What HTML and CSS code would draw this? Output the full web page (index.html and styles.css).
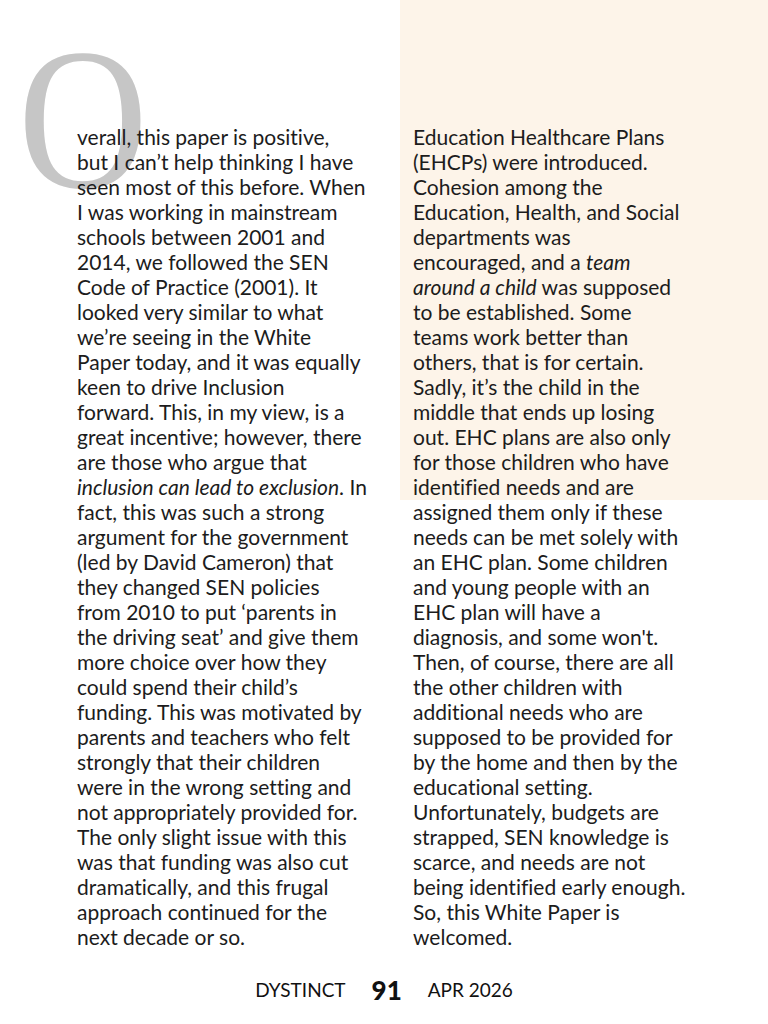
FILE: index.html
```html
<!DOCTYPE html>
<html lang="en">
<head>
<meta charset="utf-8">
<title>Dystinct 91</title>
<link rel="stylesheet" href="styles.css">
</head>
<body>
<div class="page">
  <span class="dropcap">O</span>
  <div class="columns">
    <p class="col">verall, this paper is positive,<br>
but I can’t help thinking I have<br>
seen most of this before. When<br>
I was working in mainstream<br>
schools between 2001 and<br>
2014, we followed the SEN<br>
Code of Practice (2001). It<br>
looked very similar to what<br>
we’re seeing in the White<br>
Paper today, and it was equally<br>
keen to drive Inclusion<br>
forward. This, in my view, is a<br>
great incentive; however, there<br>
are those who argue that<br>
<i>inclusion can lead to exclusion</i>. In<br>
fact, this was such a strong<br>
argument for the government<br>
(led by David Cameron) that<br>
they changed SEN policies<br>
from 2010 to put ‘parents in<br>
the driving seat’ and give them<br>
more choice over how they<br>
could spend their child’s<br>
funding. This was motivated by<br>
parents and teachers who felt<br>
strongly that their children<br>
were in the wrong setting and<br>
not appropriately provided for.<br>
The only slight issue with this<br>
was that funding was also cut<br>
dramatically, and this frugal<br>
approach continued for the<br>
next decade or so.</p>
    <p class="col">Education Healthcare Plans<br>
(EHCPs) were introduced.<br>
Cohesion among the<br>
Education, Health, and Social<br>
departments was<br>
encouraged, and a <i>team</i><br>
<i>around a child</i> was supposed<br>
to be established. Some<br>
teams work better than<br>
others, that is for certain.<br>
Sadly, it’s the child in the<br>
middle that ends up losing<br>
out. EHC plans are also only<br>
for those children who have<br>
identified needs and are<br>
assigned them only if these<br>
needs can be met solely with<br>
an EHC plan. Some children<br>
and young people with an<br>
EHC plan will have a<br>
diagnosis, and some won't.<br>
Then, of course, there are all<br>
the other children with<br>
additional needs who are<br>
supposed to be provided for<br>
by the home and then by the<br>
educational setting.<br>
Unfortunately, budgets are<br>
strapped, SEN knowledge is<br>
scarce, and needs are not<br>
being identified early enough.<br>
So, this White Paper is<br>
welcomed.</p>
  </div>
  <footer class="footer">
    <span class="brand">DYSTINCT</span>
    <span class="pagenum">91</span>
    <span class="issue">APR 2026</span>
  </footer>
</div>
</body>
</html>
```

FILE: styles.css
```css
html, body {
  margin: 0;
  padding: 0;
}

body {
  background: #ffffff;
}

.page {
  position: relative;
  width: 768px;
  height: 1024px;
  background: linear-gradient(#fdf4e9, #fdf4e9) no-repeat 400px 0 / 368px 500px;
  font-family: Lato, "Liberation Sans", sans-serif;
  color: #1c1c1c;
  box-sizing: border-box;
  padding-top: 124px;
}

.dropcap {
  position: absolute;
  left: 18px;
  top: 18px;
  font-family: "Liberation Serif", "DejaVu Serif", serif;
  font-size: 202px;
  line-height: 1;
  color: #c6c6c6;
  transform: scaleX(0.89);
  transform-origin: left top;
  z-index: 0;
}

.columns {
  position: relative;
  z-index: 1;
  display: grid;
  grid-template-columns: 336px 355px;
  padding-left: 77px;
}

.col {
  margin: 0;
  font-size: 21px;
  line-height: 25px;
  white-space: nowrap;
  font-variant-ligatures: no-common-ligatures;
}

.footer {
  display: flex;
  justify-content: center;
  align-items: center;
  gap: 26px;
  margin-top: 29px;
  font-size: 19px;
  line-height: 24px;
  color: #111;
}

.pagenum {
  font-weight: 900;
  font-size: 26px;
}
```
